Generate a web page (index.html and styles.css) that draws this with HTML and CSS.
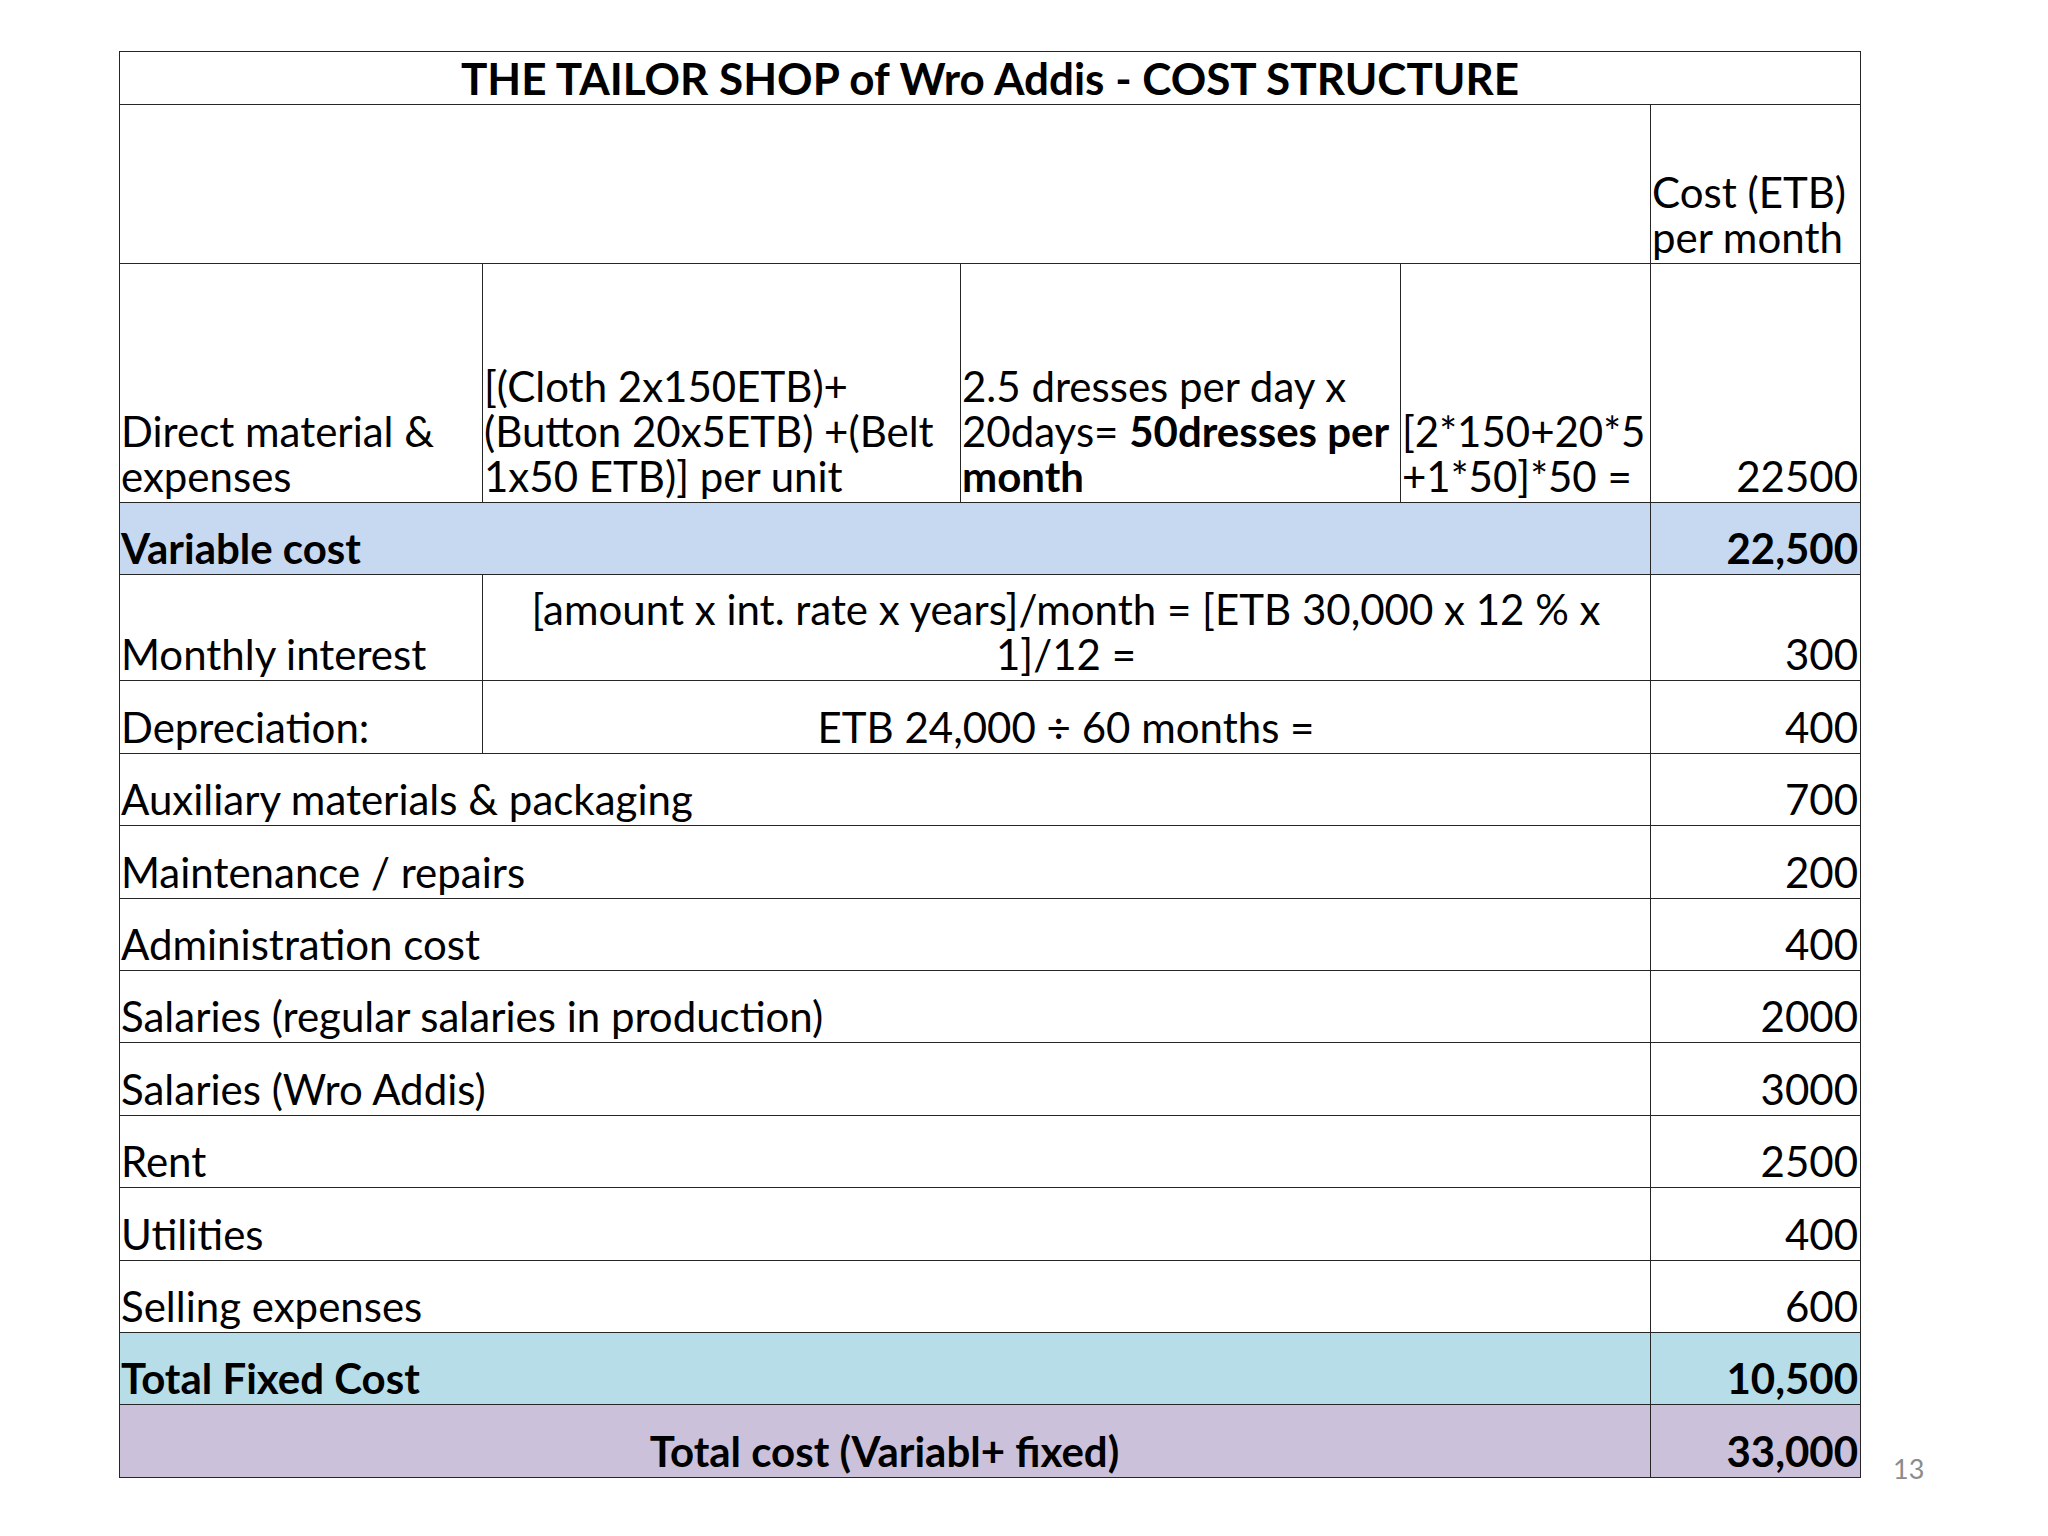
FILE: index.html
```html
<!DOCTYPE html>
<html>
<head>
<meta charset="utf-8">
<link rel="stylesheet" href="styles.css">
</head>
<body>
<div class="slide">
  <table class="cost">
    <colgroup>
      <col class="c1"><col class="c2"><col class="c3"><col class="c4"><col class="c5">
    </colgroup>
    <tr class="r-title">
      <td colspan="5" class="title">THE TAILOR SHOP of Wro Addis - COST STRUCTURE</td>
    </tr>
    <tr class="r-head">
      <td colspan="4"></td>
      <td>Cost (ETB)<br>per month</td>
    </tr>
    <tr class="r-direct">
      <td>Direct material &amp;<br>expenses</td>
      <td>[(Cloth 2x150ETB)+<br>(Button 20x5ETB) +(Belt<br>1x50 ETB)] per unit</td>
      <td>2.5 dresses per day x<br>20days= <b>50dresses per<br>month</b></td>
      <td>[2*150+20*5<br>+1*50]*50 =</td>
      <td class="num">22500</td>
    </tr>
    <tr class="r-std var">
      <td colspan="4"><b>Variable cost</b></td>
      <td class="num"><b>22,500</b></td>
    </tr>
    <tr class="r-interest">
      <td>Monthly interest</td>
      <td colspan="3" class="center">[amount x int. rate x years]/month = [ETB 30,000 x 12 % x<br>1]/12 =</td>
      <td class="num">300</td>
    </tr>
    <tr class="r-std">
      <td>Depreciation:</td>
      <td colspan="3" class="center">ETB 24,000 ÷ 60 months =</td>
      <td class="num">400</td>
    </tr>
    <tr class="r-std"><td colspan="4">Auxiliary materials &amp; packaging</td><td class="num">700</td></tr>
    <tr class="r-std"><td colspan="4">Maintenance / repairs</td><td class="num">200</td></tr>
    <tr class="r-std"><td colspan="4">Administration cost</td><td class="num">400</td></tr>
    <tr class="r-std"><td colspan="4">Salaries (regular salaries in production)</td><td class="num">2000</td></tr>
    <tr class="r-std"><td colspan="4">Salaries (Wro Addis)</td><td class="num">3000</td></tr>
    <tr class="r-std"><td colspan="4">Rent</td><td class="num">2500</td></tr>
    <tr class="r-std"><td colspan="4">Utilities</td><td class="num">400</td></tr>
    <tr class="r-std"><td colspan="4">Selling expenses</td><td class="num">600</td></tr>
    <tr class="r-std fixed">
      <td colspan="4"><b>Total Fixed Cost</b></td>
      <td class="num"><b>10,500</b></td>
    </tr>
    <tr class="r-std total">
      <td colspan="4" class="center"><b>Total cost (Variabl+ fixed)</b></td>
      <td class="num"><b>33,000</b></td>
    </tr>
  </table>
  <div class="page-num">13</div>
</div>
</body>
</html>
```

FILE: styles.css
```css
html, body {
  margin: 0;
  padding: 0;
  background: #ffffff;
}

.slide {
  position: relative;
  width: 2048px;
  height: 1536px;
  padding: 51px 0 0 119px;
  box-sizing: border-box;
  font-family: "Lato", "Liberation Sans", sans-serif;
  color: #000;
}

.cost {
  border-collapse: collapse;
  table-layout: fixed;
  width: 1741px;
  font-size: 42px;
  line-height: 45px;
}

.c1 { width: 363px; }
.c2 { width: 478px; }
.c3 { width: 440px; }
.c4 { width: 250px; }
.c5 { width: 210px; }

.cost td {
  border: 1px solid #262626;
  padding: 0 2px 3px 1px;
  vertical-align: bottom;
  text-align: left;
  overflow: hidden;
  white-space: nowrap;
}

.cost b {
  font-weight: 700;
}

.cost .title {
  font-size: 44px;
  font-weight: 700;
  text-align: center;
  vertical-align: middle;
  padding: 0;
}

.r-title { height: 53px; }
.r-head { height: 159px; }
.r-direct { height: 239px; }
.r-interest { height: 106px; }
.r-std { height: 72.4px; }

.cost .num { text-align: right; }
.cost .center { text-align: center; }

.var td { background: #c6d9f0; }
.fixed td { background: #b7dde8; }
.total td { background: #ccc1da; }

.page-num {
  position: absolute;
  left: 1893px;
  top: 1452px;
  font-size: 27px;
  color: #8c8c8c;
}
```
